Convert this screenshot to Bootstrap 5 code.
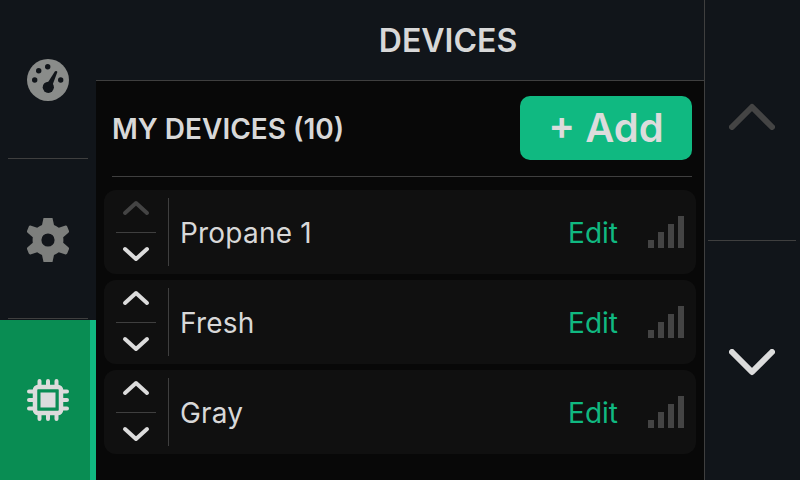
<!DOCTYPE html>
<html lang="en">
<head>
    <meta charset="UTF-8">
    <title>Devices</title>
    <link href="https://cdn.jsdelivr.net/npm/bootstrap@5.3.3/dist/css/bootstrap.min.css" rel="stylesheet">
    <style>
        html, body {
            width: 800px;
            height: 480px;
            overflow: hidden;
        }
        body {
            background-color: #080808;
            color: #dcdcdc;
            font-family: Inter, "Liberation Sans", sans-serif;
        }
        .side-menu {
            width: 96px;
            background-color: #11151a;
        }
        .side-item {
            height: 160px;
            position: relative;
        }
        .side-item:not(.side-active)::after {
            content: "";
            position: absolute;
            left: 8px;
            right: 8px;
            bottom: 1px;
            height: 1px;
            background-color: #3f3f3f;
        }
        .side-active {
            background-color: #098d53;
            border-right: 6px solid #10b981;
            padding-left: 6px;
        }
        .main-pane {
            width: 608px;
        }
        .top-title {
            height: 81px;
            background-color: #11151a;
            border-bottom: 1px solid #3f3f3f;
            font-size: 32px;
            font-weight: 600;
            color: #d8d8d8;
            padding: 2px 0 0 96px;
        }
        .list-head {
            height: 96px;
            margin: 0 12px 0 16px;
            border-bottom: 1px solid #3f3f3f;
            padding-bottom: 1px;
        }
        .list-title {
            font-size: 28px;
            font-weight: 600;
            color: #d8d8d8;
            padding-top: 1px;
        }
        .add-btn {
            width: 172px;
            height: 64px;
            background-color: #10b981;
            border: 0;
            border-radius: 10px;
            color: #dcdcdc;
            font-size: 40px;
            font-weight: 600;
            line-height: 1;
            padding: 0;
        }
        .add-btn:hover {
            background-color: #10b981;
            color: #dcdcdc;
        }
        .device-list {
            padding: 13px 8px 0;
            gap: 6px;
        }
        .device-row {
            height: 84px;
            background-color: #101010;
            border-radius: 12px;
        }
        .move-col {
            width: 64px;
            height: 68px;
            margin-left: 1px;
            border-right: 1px solid #3f3f3f;
        }
        .move-btn {
            height: 34px;
            width: 40px;
            margin-left: 11px;
            padding-bottom: 14px;
        }
        .move-btn + .move-btn {
            border-top: 1px solid #3f3f3f;
            padding-bottom: 0;
            padding-top: 8px;
            height: 35px;
        }
        .device-name {
            font-size: 28px;
            color: #d8d8d8;
            margin-left: 11px;
            letter-spacing: .2px;
            padding-top: 2px;
        }
        .edit-link {
            font-size: 28px;
            color: #10b981;
            margin-right: 30px;
            padding-top: 2px;
        }
        .signal-bars {
            gap: 4px;
            height: 32px;
            margin-right: 12px;
        }
        .signal-bars span {
            width: 6px;
            background-color: #444;
        }
        .signal-bars .bar-1 { height: 8px; }
        .signal-bars .bar-2 { height: 16px; }
        .signal-bars .bar-3 { height: 24px; }
        .signal-bars .bar-4 { height: 32px; }
        .page-col {
            width: 96px;
            background-color: #11151a;
            border-left: 1px solid #3f3f3f;
            padding-right: 1px;
        }
        .page-btn {
            height: 240px;
        }
        .page-up {
            position: relative;
        }
        .page-up::after {
            content: "";
            position: absolute;
            left: 3px;
            right: 3px;
            bottom: -1px;
            height: 1px;
            background-color: #3f3f3f;
        }
        .page-down svg {
            margin-top: 5px;
        }
        .page-up svg {
            margin-bottom: 8px;
        }
    </style>
</head>
<body>
<div class="d-flex" style="height: 480px">
    <div class="side-menu d-flex flex-column flex-shrink-0">
        <div class="side-item d-flex align-items-center justify-content-center">
            <svg width="42" height="42" viewBox="0 0 42 42">
                <circle cx="21" cy="21" r="21" fill="#8a8c8a"/>
                <g fill="#11151a">
                    <circle cx="20.700" cy="7.700" r="2.700"/>
                    <circle cx="11.700" cy="11.700" r="2.700"/>
                    <circle cx="7.700" cy="21" r="2.700"/>
                    <circle cx="33.700" cy="21" r="2.700"/>
                    <circle cx="21.300" cy="28.300" r="5.600"/>
                    <path d="M18.600 27 L28 12.300 Q29.800 11.300 30.400 13 L24.400 29 Z"/>
                </g>
            </svg>
        </div>
        <div class="side-item d-flex align-items-center justify-content-center">
            <svg width="42" height="46" viewBox="0 0 42 46">
                <path fill="#7d7f7d" fill-rule="evenodd" d="M16.500 1 H25.500 L27 8 Q29.500 9 31.800 10.800 L38.600 8.600 Q39.600 8.400 40.200 9.400 L42 14 Q42.200 15 41.400 15.700 L36.200 20.200 Q36.600 23 36.200 25.800 L41.400 30.300 Q42.200 31 42 32 L40.200 36.600 Q39.600 37.600 38.600 37.400 L31.800 35.200 Q29.500 37 27 38 L25.500 45 H16.500 L15 38 Q12.500 37 10.200 35.200 L3.400 37.400 Q2.400 37.600 1.800 36.600 L0 32 Q-.2 31 .6 30.300 L5.800 25.800 Q5.400 23 5.800 20.200 L.6 15.700 Q-.2 15 0 14 L1.800 9.400 Q2.400 8.400 3.400 8.600 L10.200 10.800 Q12.500 9 15 8 Z M21 16.400 A6.600 6.600 0 1 0 21 29.600 A6.600 6.600 0 1 0 21 16.400 Z"/>
            </svg>
        </div>
        <div class="side-item side-active d-flex align-items-center justify-content-center">
            <svg width="42" height="42" viewBox="0 0 42 42">
                <rect x="8" y="8" width="26" height="26" rx="3" fill="none" stroke="#dcdcdc" stroke-width="4.500"/>
                <rect x="13.500" y="13.500" width="15" height="15" fill="#dcdcdc"/>
                <g stroke="#dcdcdc" stroke-width="4" stroke-linecap="round">
                    <path d="M12.500 2 V8 M21 2 V8 M29.500 2 V8 M12.500 34 V40 M21 34 V40 M29.500 34 V40"/>
                    <path d="M2 12.500 H8 M2 21 H8 M2 29.500 H8 M34 12.500 H40 M34 21 H40 M34 29.500 H40"/>
                </g>
            </svg>
        </div>
    </div>

    <div class="main-pane d-flex flex-column flex-shrink-0">
        <div class="top-title d-flex align-items-center justify-content-center">DEVICES</div>
        <div class="list-head d-flex align-items-center justify-content-between">
            <span class="list-title">MY DEVICES (10)</span>
            <button class="btn add-btn">+ Add</button>
        </div>
        <div class="device-list d-flex flex-column" id="filas"></div>
    </div>

    <div class="page-col d-flex flex-column flex-shrink-0">
        <div class="page-btn page-up d-flex align-items-center justify-content-center">
            <svg width="46" height="27" viewBox="0 0 46 27"><path d="M3 24 L23 4 L43 24" fill="none" stroke="#444" stroke-width="6" stroke-linecap="round" stroke-linejoin="round"/></svg>
        </div>
        <div class="page-btn page-down d-flex align-items-center justify-content-center">
            <svg width="46" height="27" viewBox="0 0 46 27"><path d="M3 3 L23 23 L43 3" fill="none" stroke="#dcdcdc" stroke-width="6" stroke-linecap="round" stroke-linejoin="round"/></svg>
        </div>
    </div>
</div>

<script>
    const dispositivos = ["Propane 1", "Fresh", "Gray"];
    const contenedor = document.getElementById("filas");

    dispositivos.forEach((nombre, i) => {
        const colorArriba = i === 0 ? "#444" : "#dcdcdc";
        const fila = document.createElement("div");
        fila.className = "device-row d-flex align-items-center";
        fila.innerHTML = `
            <div class="move-col flex-shrink-0">
                <div class="move-btn d-flex align-items-center justify-content-center">
                    <svg width="28" height="16" viewBox="0 0 28 16"><path d="M3 13 L14 3 L25 13" fill="none" stroke="${colorArriba}" stroke-width="4" stroke-linecap="round" stroke-linejoin="round"/></svg>
                </div>
                <div class="move-btn d-flex align-items-center justify-content-center">
                    <svg width="28" height="16" viewBox="0 0 28 16"><path d="M3 3 L14 13 L25 3" fill="none" stroke="#dcdcdc" stroke-width="4" stroke-linecap="round" stroke-linejoin="round"/></svg>
                </div>
            </div>
            <span class="device-name flex-grow-1">${nombre}</span>
            <span class="edit-link">Edit</span>
            <div class="signal-bars d-flex align-items-end">
                <span class="bar-1"></span><span class="bar-2"></span><span class="bar-3"></span><span class="bar-4"></span>
            </div>
        `;
        contenedor.appendChild(fila);
    });
</script>
</body>
</html>
